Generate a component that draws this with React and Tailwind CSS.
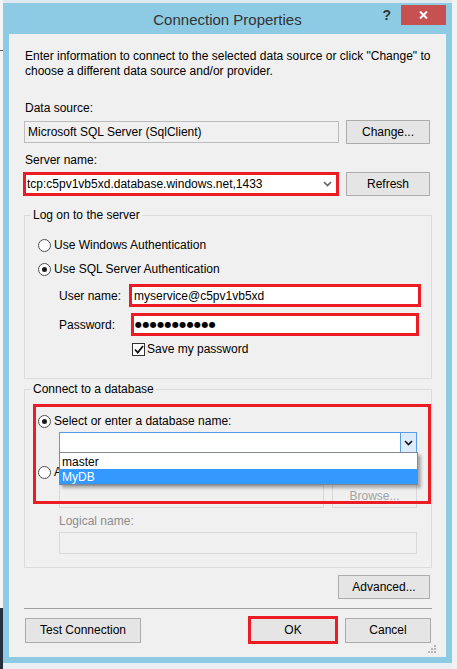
import React from 'react';

function Radio({ checked }) {
  return (
    <span className="w-[13px] h-[13px] rounded-full border border-[#4d4d4d] bg-white flex items-center justify-center shrink-0">
      {checked && <span className="w-[5px] h-[5px] rounded-full bg-[#1a1a1a]" />}
    </span>
  );
}

function Btn({ className = '', children, disabled }) {
  return (
    <div
      className={`flex items-center justify-center border text-[12px] ${
        disabled ? 'border-[#d9d9d9] bg-[#f0f0f0] text-[#a3a3a3]' : 'border-[#acacac] bg-[#e5e5e5] text-black'
      } ${className}`}
    >
      {children}
    </div>
  );
}

function Chevron({ color = '#606060' }) {
  return (
    <svg width="9" height="6" viewBox="0 0 9 6">
      <path d="M1 1 L4.5 4.5 L8 1" fill="none" stroke={color} strokeWidth="1.6" />
    </svg>
  );
}

export default function App() {
  return (
    <div className="w-[457px] h-[669px] flex overflow-hidden bg-[#e9eef2] font-['Liberation_Sans',Arial,sans-serif] text-[12px] text-black">
      {/* desktop behind the dialog, left edge */}
      <div className="w-[3px] flex flex-col bg-[#f4f4f4]">
        <div className="h-[50px]" />
        <div className="h-px bg-[#555]" />
        <div className="flex-1" />
        <div className="h-[61px] bg-[#24303d]" />
      </div>

      <div className="w-[449px] flex flex-col">
        <div className="h-[3px] bg-[#dfe9f0]" />
        <div className="h-[660px] bg-[#8ccbe3] flex flex-col">
          {/* title bar */}
          <div className="h-[31px] flex items-start">
            <div className="w-[74px]" />
            <div className="flex-1 text-center text-[15px] leading-[20px] pt-[7px] text-[#333]">
              Connection Properties
            </div>
            <div className="w-[74px] flex items-start justify-end pr-[6px]">
              <span className="mt-[4px] mr-[10px] text-[14px] leading-[16px] font-bold text-[#333]">?</span>
              <div className="mt-[2px] w-[45px] h-[20px] bg-[#c75050] flex items-center justify-center">
                <svg width="9" height="8" viewBox="0 0 9 8">
                  <path d="M1 0.5 L8 7.5 M8 0.5 L1 7.5" stroke="white" strokeWidth="2" />
                </svg>
              </div>
            </div>
          </div>

          {/* client area */}
          <div className="mx-[6px] mb-[6px] flex-1 bg-[#f0f0f0] pl-[15px] pr-[14px] flex flex-col">
            <p className="mt-[15px] pl-px leading-[15px] whitespace-nowrap">
              Enter information to connect to the selected data source or click "Change" to
              <br />
              choose a different data source and/or provider.
            </p>

            <div className="mt-[22px] pl-px leading-[15px]">Data source:</div>
            <div className="mt-[4px] h-[24px] flex items-center gap-[7px]">
              <div className="w-[315px] h-[22px] border border-[#bcbcbc] bg-[#f0f0f0] flex items-center pl-[3px]">
                Microsoft SQL Server (SqlClient)
              </div>
              <Btn className="w-[84px] h-[24px]">Change...</Btn>
            </div>

            <div className="mt-[9px] pl-px leading-[15px]">Server name:</div>
            <div className="mt-[4px] h-[24px] flex items-center gap-[7px]">
              <div className="-ml-px w-[316px] h-[24px] border-[3px] border-[#ec1c24] bg-white flex items-center pl-px pr-[4px]">
                <span className="flex-1">tcp:c5pv1vb5xd.database.windows.net,1433</span>
                <Chevron />
              </div>
              <Btn className="w-[84px] h-[24px]">Refresh</Btn>
            </div>

            {/* Log on to the server */}
            <fieldset className="mt-[12px] h-[171px] border border-[#dcdcdc]">
              <legend className="ml-[6px] px-[2px] leading-[15px]">Log on to the server</legend>
              <div className="mt-[14px] h-[16px] flex items-center gap-[3px] pl-[13px]">
                <Radio />
                <span>Use Windows Authentication</span>
              </div>
              <div className="mt-[8px] h-[16px] flex items-center gap-[3px] pl-[13px]">
                <Radio checked />
                <span>Use SQL Server Authentication</span>
              </div>
              <div className="mt-[7px] h-[23px] flex items-center pl-[34px]">
                <span className="w-[70px]">User name:</span>
                <div className="w-[292px] h-[23px] border-[3px] border-[#ec1c24] bg-white flex items-center pl-[2px]">
                  myservice@c5pv1vb5xd
                </div>
              </div>
              <div className="mt-[6px] h-[23px] flex items-center pl-[34px]">
                <span className="w-[70px]">Password:</span>
                <div className="ml-[2px] w-[288px] h-[23px] border-[3px] border-[#ec1c24] bg-white flex items-center pl-px text-[8px] font-['DejaVu_Sans',sans-serif] tracking-[0.4px]">
                  ●●●●●●●●●●●
                </div>
              </div>
              <div className="mt-[5px] h-[16px] flex items-center gap-[2px] pl-[107px]">
                <span className="w-[13px] h-[13px] border border-[#333] bg-white flex items-center justify-center">
                  <svg width="10" height="9" viewBox="0 0 10 9">
                    <path d="M1 4.5 L3.8 7.5 L9 1" fill="none" stroke="#111" strokeWidth="1.8" />
                  </svg>
                </span>
                <span>Save my password</span>
              </div>
            </fieldset>

            {/* Connect to a database */}
            <fieldset className="mt-[3px] h-[186px] border border-[#dcdcdc]">
              <legend className="ml-[6px] px-[2px] leading-[15px]">Connect to a database</legend>
              <div className="relative flex flex-col">
                <div className="absolute left-[8px] top-[7px] w-[398px] h-[100px] border-[3px] border-[#ec1c24] z-20 pointer-events-none" />

                <div className="mt-[16px] h-[16px] flex items-center gap-[3px] pl-[13px]">
                  <Radio checked />
                  <span>Select or enter a database name:</span>
                </div>
                <div className="mt-[3px] ml-[34px] w-[358px] h-[21px] relative border border-[#569de5] bg-white flex justify-end">
                  <div className="w-[16px] h-full border-l border-[#569de5] bg-[#dcecfc] flex items-center justify-center">
                    <Chevron color="#111" />
                  </div>
                  <div className="absolute -left-px top-full w-[359px] border border-[#828790] bg-white z-30 shadow-[3px_3px_3px_rgba(0,0,0,0.3)] flex flex-col">
                    <div className="h-[16px] leading-[16px] pt-px pl-[2px]">master</div>
                    <div className="h-[15px] leading-[15px] pt-px pl-[2px] bg-[#3399ff] text-white">MyDB</div>
                  </div>
                </div>

                <div className="mt-[11px] h-[16px] flex items-center gap-[3px] pl-[13px]">
                  <Radio />
                  <span>Attach a database file, file name:</span>
                </div>
                <div className="mt-[4px] ml-[34px] h-[24px] flex items-center gap-[8px]">
                  <div className="w-[265px] h-[23px] border border-[#d9d9d9] bg-[#f0f0f0]" />
                  <Btn disabled className="w-[85px] h-[24px]">Browse...</Btn>
                </div>
                <div className="mt-[6px] ml-[34px] leading-[15px] text-[#8c8c8c]">Logical name:</div>
                <div className="mt-[3px] ml-[34px] w-[358px] h-[22px] border border-[#d9d9d9] bg-[#f0f0f0]" />
              </div>
            </fieldset>

            <div className="mt-[7px] flex justify-end pr-[2px]">
              <Btn className="w-[92px] h-[24px]">Advanced...</Btn>
            </div>

            <div className="mt-[9px] h-px bg-[#a0a0a0]" />

            <div className="mt-[7px] h-[28px] flex items-center">
              <Btn className="ml-px w-[116px] h-[25px]">Test Connection</Btn>
              <div className="flex-1" />
              <div className="w-[90px] h-[28px] border-[3px] border-[#ec1c24] bg-[#e5e5e5] flex items-center justify-center">
                OK
              </div>
              <Btn className="ml-[7px] mr-px w-[86px] h-[25px]">Cancel</Btn>
            </div>

            <div className="mt-px -mr-[4px] flex justify-end">
              <svg width="8" height="8" viewBox="0 0 8 8">
                <rect x="6" y="0" width="2" height="2" fill="#b5b5b5" />
                <rect x="3" y="3" width="2" height="2" fill="#b5b5b5" />
                <rect x="6" y="3" width="2" height="2" fill="#b5b5b5" />
                <rect x="0" y="6" width="2" height="2" fill="#b5b5b5" />
                <rect x="3" y="6" width="2" height="2" fill="#b5b5b5" />
                <rect x="6" y="6" width="2" height="2" fill="#b5b5b5" />
              </svg>
            </div>
          </div>
        </div>
        <div className="flex-1 bg-[#e9eef2]" />
      </div>

      <div className="flex-1 bg-[#f2f2f2]" />
    </div>
  );
}
